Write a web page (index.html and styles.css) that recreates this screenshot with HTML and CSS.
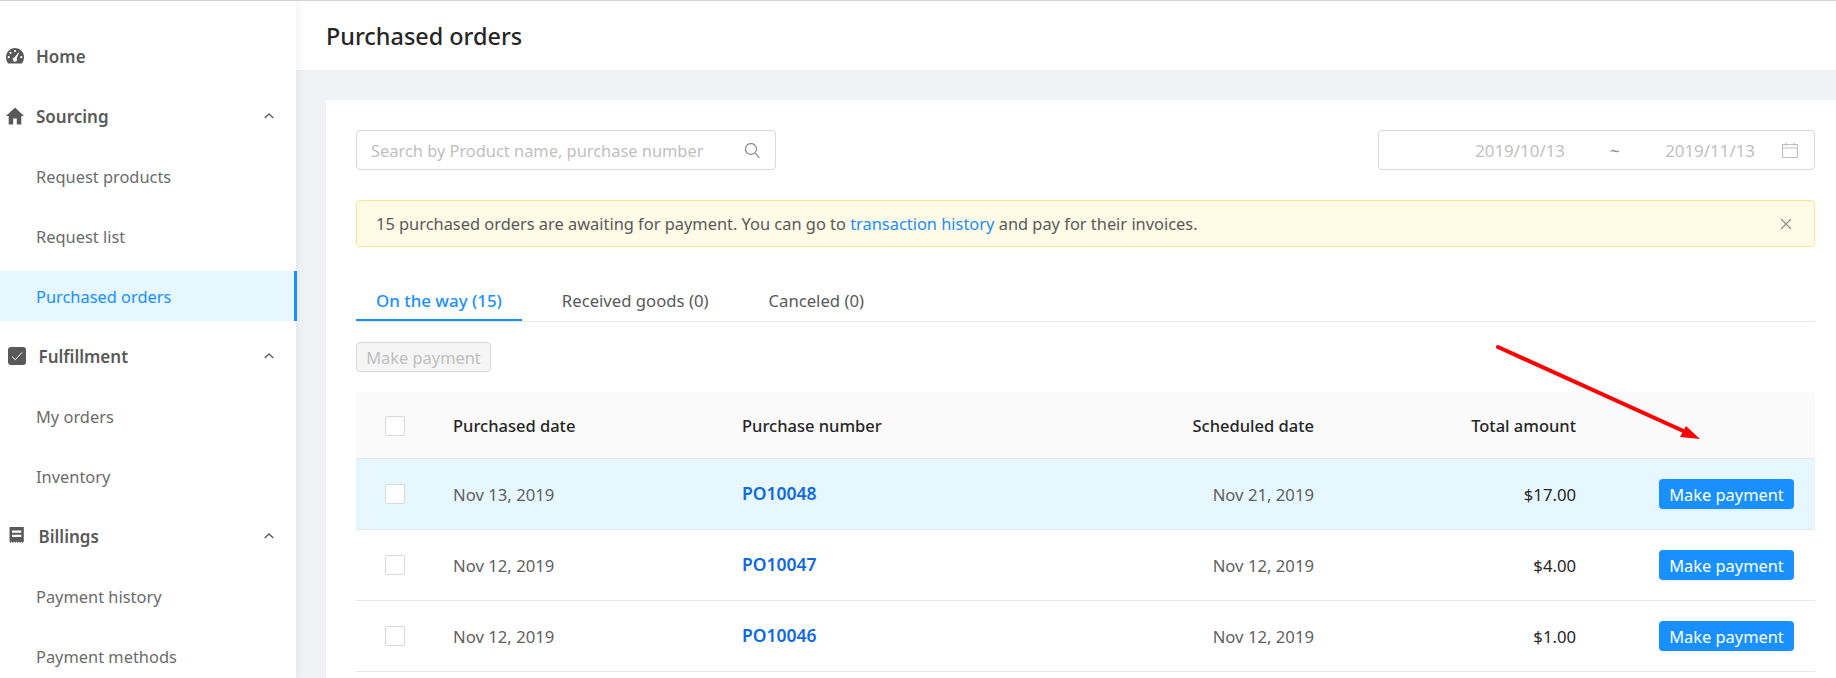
FILE: index.html
```html
<!DOCTYPE html>
<html lang="en">
<head>
<meta charset="utf-8">
<title>Purchased orders</title>
<link rel="stylesheet" href="styles.css">
</head>
<body>
<div class="app">
  <aside class="sidebar">
    <nav class="menu">
      <a class="group">
        <svg class="gicon" viewBox="0 0 18 18"><path d="M9 1C4 1 0 5 0 10c0 2.500.8 4.800 2 6.500h14c1.200-1.700 2-4 2-6.500C18 5 14 1 9 1z"/><circle class="hole" cx="9" cy="4" r="1.100"/><circle class="hole" cx="4.500" cy="5.800" r="1.100"/><circle class="hole" cx="2.700" cy="10.200" r="1.100"/><circle class="hole" cx="15.300" cy="10.200" r="1.100"/><path class="hole" d="M12.300 5.500 13 6l-2.300 5.200c.3.400.5.800.5 1.300a2.200 2.200 0 1 1-2.500-2.200z"/></svg>
        <span class="glabel">Home</span>
      </a>
      <a class="group">
        <svg class="gicon" viewBox="0 0 18 18"><path d="M9 .5 0 9h2.700v8.500h4.500v-6h3.600v6h4.500V9H18z"/></svg>
        <span class="glabel">Sourcing</span>
        <svg class="chev" viewBox="0 0 10 6"><path d="M.7 5 5 1l4.300 4"/></svg>
      </a>
      <a class="item">Request products</a>
      <a class="item">Request list</a>
      <a class="item active">Purchased orders</a>
      <a class="group">
        <svg class="gicon box" viewBox="0 0 18 18"><rect x="0" y="0" width="18" height="18" rx="3"/><path class="tick" d="M4 9.500l3.300 3.200L14 5.500"/></svg>
        <span class="glabel wide">Fulfillment</span>
        <svg class="chev" viewBox="0 0 10 6"><path d="M.7 5 5 1l4.300 4"/></svg>
      </a>
      <a class="item">My orders</a>
      <a class="item">Inventory</a>
      <a class="group">
        <svg class="gicon box" viewBox="0 0 18 18"><path fill-rule="evenodd" d="M1.500 0h14.300v14.500l-1.200 1.500-1.200-1.500-1.200 1.500-1.200-1.500-1.200 1.500-1.200-1.500-1.200 1.500-1.200-1.500-1.200 1.500-1.200-1.500L2.700 16l-1.200-1.500zM4 3.500v2.200h9.300V3.500zM4 7.700v2.200h9.300V7.700z"/></svg>
        <span class="glabel wide">Billings</span>
        <svg class="chev" viewBox="0 0 10 6"><path d="M.7 5 5 1l4.300 4"/></svg>
      </a>
      <a class="item">Payment history</a>
      <a class="item">Payment methods</a>
    </nav>
  </aside>
  <main class="main">
    <header class="topbar"><h1 class="title">Purchased orders</h1></header>
    <section class="card">
      <div class="filters">
        <div class="search">
          <span class="placeholder">Search by Product name, purchase number</span>
          <svg class="sicon" viewBox="1 1 14.500 14.500"><circle cx="6.800" cy="6.800" r="5.300"/><path d="m10.800 10.800 4.200 4.400"/></svg>
        </div>
        <div class="range">
          <span class="date">2019/10/13</span>
          <span class="tilde">~</span>
          <span class="date">2019/11/13</span>
          <svg class="cal" viewBox="0 0 16 16"><path d="M.5 2.500h15v13H.5zM.5 6h15M4 .5v3.500M12 .5v3.500"/></svg>
        </div>
      </div>
      <div class="alert">
        <span>15 purchased orders are awaiting for payment. You can go to <a class="link">transaction history</a> and pay for their invoices.</span>
        <svg class="close" viewBox="0 0 12 12"><path d="m1 1 10 10M11 1 1 11"/></svg>
      </div>
      <div class="tabs">
        <a class="tab on">On the way (15)</a>
        <a class="tab">Received goods (0)</a>
        <a class="tab">Canceled (0)</a>
      </div>
      <button class="btn-disabled">Make payment</button>
      <div class="table">
        <div class="row head">
          <span class="check"></span>
          <span>Purchased date</span>
          <span>Purchase number</span>
          <span class="num">Scheduled date</span>
          <span class="num">Total amount</span>
          <span></span>
        </div>
        <div class="row sel">
          <span class="check"></span>
          <span class="muted">Nov 13, 2019</span>
          <a class="po">PO10048</a>
          <span class="num muted">Nov 21, 2019</span>
          <span class="num amt">$17.00</span>
          <button class="pay">Make payment</button>
        </div>
        <div class="row">
          <span class="check"></span>
          <span class="muted">Nov 12, 2019</span>
          <a class="po">PO10047</a>
          <span class="num muted">Nov 12, 2019</span>
          <span class="num amt">$4.00</span>
          <button class="pay">Make payment</button>
        </div>
        <div class="row">
          <span class="check"></span>
          <span class="muted">Nov 12, 2019</span>
          <a class="po">PO10046</a>
          <span class="num muted">Nov 12, 2019</span>
          <span class="num amt">$1.00</span>
          <button class="pay">Make payment</button>
        </div>
      </div>
    </section>
  </main>
</div>
<svg class="arrow" viewBox="0 0 1836 678"><path class="shaft" d="M1498 347 1690 434"/><path class="head-a" d="M1700 439 1680 437 1686 426z"/></svg>
</body>
</html>
```
FILE: styles.css
```css
* { box-sizing: border-box; }
html, body { margin: 0; height: 100%; overflow: hidden; }
body { font-family: "Noto Sans", "Open Sans", sans-serif; font-size: 16.4px; color: #595959; background: #f0f2f5; }
.app { display: flex; height: 678px; border-top: 1px solid #d5d5d8; }
.sidebar { width: 296px; flex: none; background: #fff; box-shadow: 2px 0 8px rgba(29,35,41,.06); position: relative; z-index: 2; }
.menu { display: flex; flex-direction: column; padding-top: 30px; }
.group, .item { display: flex; align-items: center; height: 50px; margin-bottom: 10px; white-space: nowrap; flex: none; }
.group { padding-left: 6px; padding-right: 22px; color: #595959; font-weight: 600; font-size: 17px; }
.gicon { width: 18px; height: 18px; fill: #595959; flex: none; }
.hole { fill: #fff; }
.box { margin-left: 1.500px; }
.tick { fill: none; stroke: #fff; stroke-width: 1; }
.glabel { margin-left: 12px; flex: 1; }
.glabel.wide { margin-left: 13px; }
.chev { width: 10px; height: 6px; fill: none; stroke: #595959; stroke-width: 1.300; flex: none; }
.item { padding-left: 36px; color: #6b6b6b; }
.item.active { background: #e6f7ff; color: #1890ff; border-right: 3px solid #1890ff; width: 297px; }
.main { flex: 1; min-width: 0; display: flex; flex-direction: column; }
.topbar { height: 69px; background: #fff; padding: 2px 0 0 30px; display: flex; align-items: center; flex: none; }
.title { margin: 0; font-size: 23.400px; font-weight: 500; color: #262626; line-height: 1; }
.card { margin: 30px 0 0 30px; background: #fff; padding: 30px 21px 0 30px; flex: 1; }
.filters { display: flex; justify-content: space-between; }
.search, .range { height: 40px; border: 1px solid #d9d9d9; border-radius: 4px; display: flex; align-items: center; }
.search { width: 420px; padding: 0 15px 0 14px; justify-content: space-between; }
.placeholder { color: #bfbfbf; white-space: nowrap; }
.sicon { width: 15px; height: 15px; fill: none; stroke: #8c8c8c; stroke-width: 1.200; flex: none; }
.range { width: 437px; font-size: 16.900px; }
.date { color: #bfbfbf; width: 186px; text-align: right; white-space: nowrap; }
.date + .tilde + .date { width: 136px; }
.tilde { color: #8c8c8c; margin-left: 45px; width: 9px; }
.cal { width: 16px; height: 16px; fill: none; stroke: #bfbfbf; stroke-width: 1.100; margin-left: 27px; flex: none; }
.alert { height: 47px; margin-top: 30px; background: #fffbe6; border: 1px solid #ffe58f; border-radius: 4px; padding: 0 22px 0 19px; display: flex; align-items: center; justify-content: space-between; color: #595959; }
.link { color: #1890ff; }
.close { width: 12px; height: 12px; fill: none; stroke: #8c8c8c; stroke-width: 1.100; flex: none; }
.tabs { display: flex; margin-top: 26px; height: 49px; border-bottom: 1px solid #e8e8e8; font-size: 16.700px; }
.tab { padding: 0 20px 9px; display: flex; align-items: flex-end; height: 48px; margin-right: 20px; white-space: nowrap; line-height: 22px; }
.tab.on { color: #1890ff; font-weight: 500; font-size: 16.900px; border-bottom: 2px solid #1890ff; padding-bottom: 7px; }
.btn-disabled { display: block; margin-top: 20px; width: 135px; height: 30px; padding: 0; font: inherit; color: #bfbfbf; background: #f5f5f5; border: 1px solid #d9d9d9; border-radius: 4px; }
.table { margin-top: 20px; }
.row { display: grid; grid-template-columns: 97px 289px 358px 214px 262px 1fr; align-items: center; height: 71px; border-bottom: 1px solid #e8e8e8; }
.head { height: 67px; background: #fafafa; color: #262626; font-weight: 500; font-size: 16.500px; border-radius: 4px 4px 0 0; }
.head .check { margin-top: 1px; }
.sel { background: #e6f7ff; }
.check { width: 20px; height: 20px; margin-left: 29px; background: #fff; border: 1px solid #d9d9d9; border-radius: 2px; }
.muted { color: #5f5f5f; font-size: 16.700px; }
.num { text-align: right; }
.amt { color: #262626; font-size: 16.700px; }
.po { color: #0f6ae0; font-weight: 600; font-size: 17.500px; margin-top: -2px; }
.pay { justify-self: end; margin-right: 21px; width: 135px; height: 30px; padding: 0; font: inherit; color: #fff; background: #1890ff; border: 0; border-radius: 4px; box-shadow: 0 2px 0 rgba(0,0,0,.03); }
.arrow { position: absolute; left: 0; top: 0; width: 1836px; height: 678px; z-index: 5; pointer-events: none; }
.shaft { stroke: #ff0000; stroke-width: 4; stroke-linecap: round; fill: none; }
.head-a { fill: #ff0000; }
```
